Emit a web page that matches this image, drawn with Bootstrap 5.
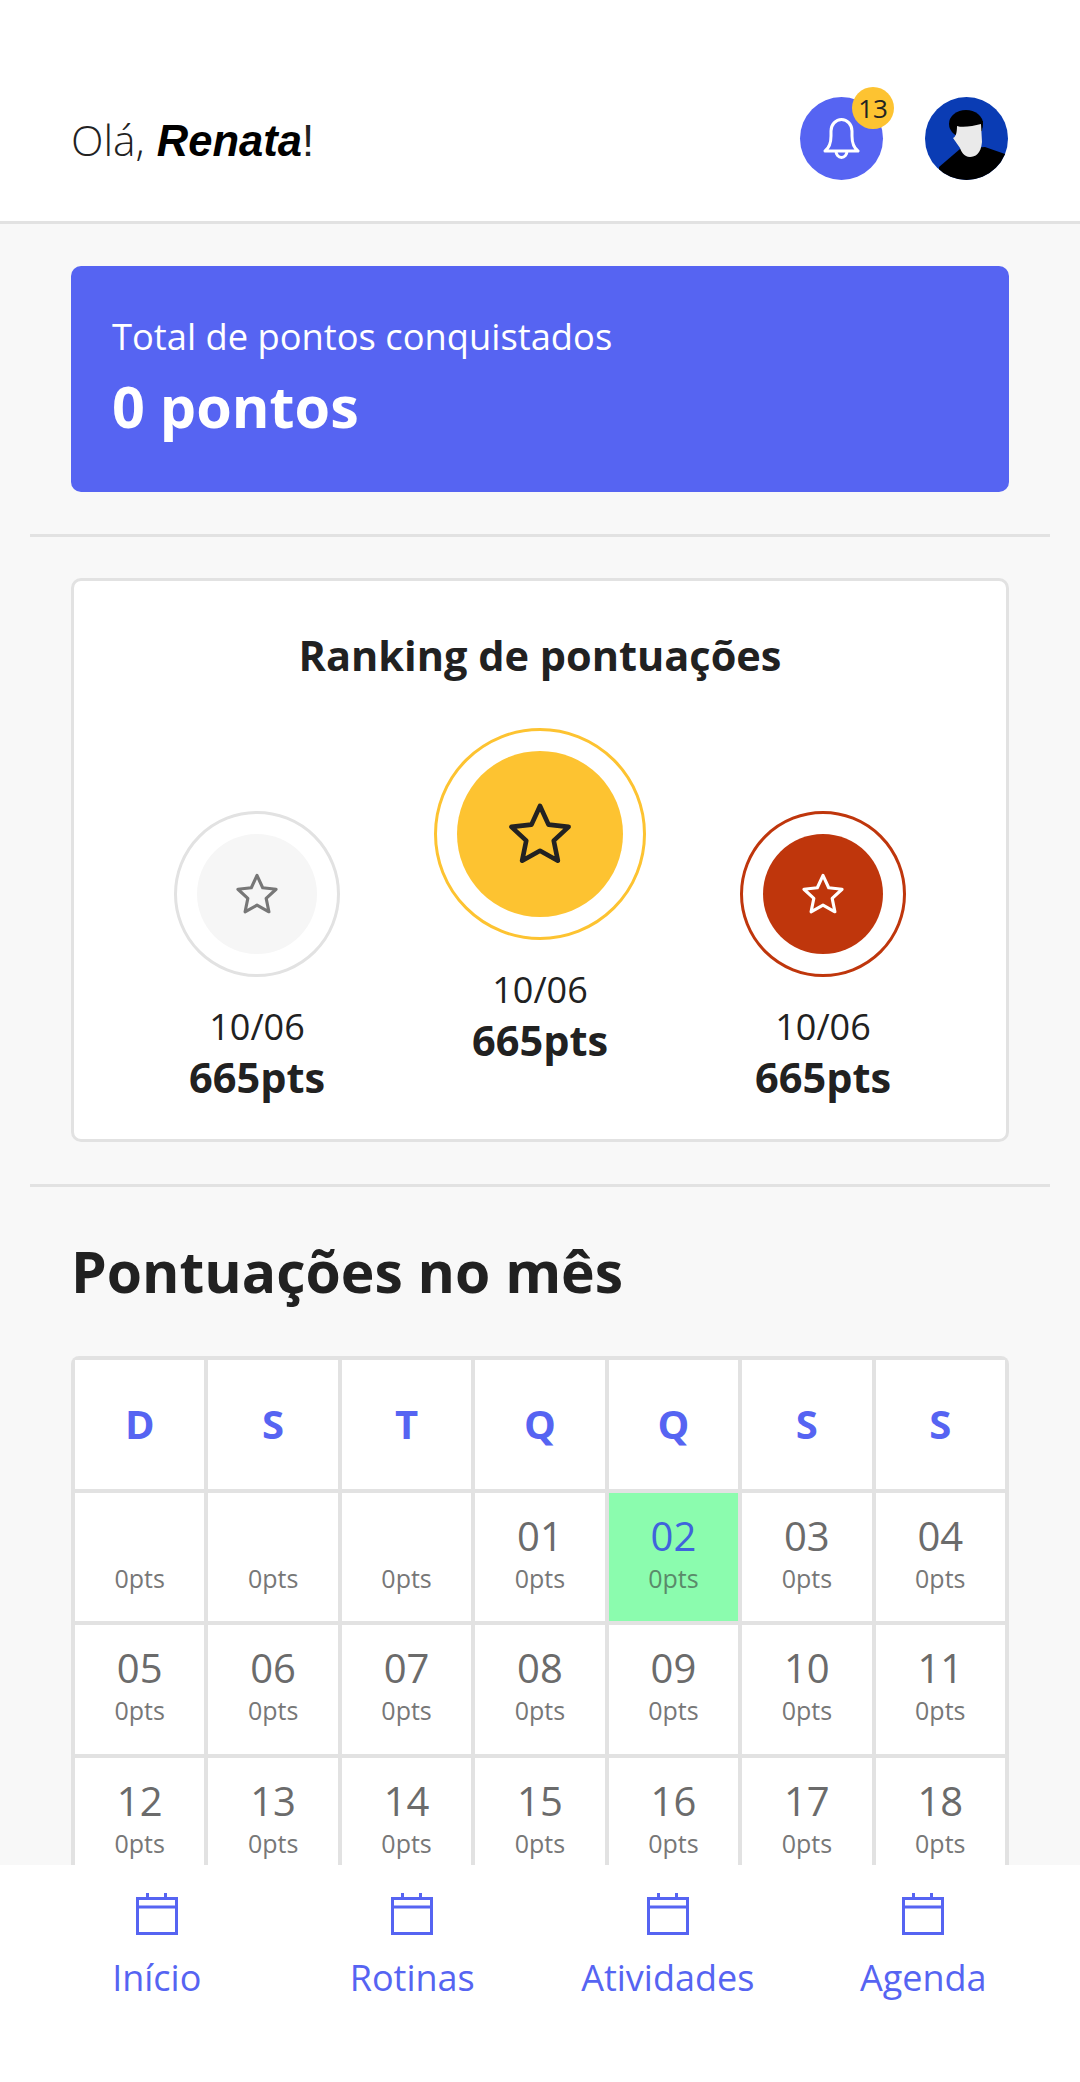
<!DOCTYPE html>
<html lang="pt-BR">
<head>
    <meta charset="UTF-8">
    <title>Pontuações</title>
    <link href="https://cdn.jsdelivr.net/npm/bootstrap@5.3.3/dist/css/bootstrap.min.css" rel="stylesheet">
    <style>
        html, body {
            height: 2082px;
            overflow: hidden;
        }
        body {
            background: #f8f8f8;
            color: #212121;
            font-family: "Open Sans", sans-serif;
        }
        .top-bar {
            height: 224px;
            padding: 97px 72px 0 71px;
            background: #fff;
            border-bottom: 3px solid #e2e2e2;
        }
        .hello {
            font-size: 43.500px;
            line-height: 86px;
            font-family: "Liberation Sans", sans-serif;
            color: #222;
        }
        .hello b {
            font-style: italic;
            font-weight: 700;
            color: #000;
        }
        .hello-o {
            font-family: "Open Sans", sans-serif;
            font-size: 42.500px;
            font-weight: 300;
        }
        .head-icons {
            gap: 42px;
        }
        .round-btn {
            position: relative;
            width: 83px;
            height: 83px;
            border-radius: 50%;
            background: #5664f2;
        }
        .bell-count {
            position: absolute;
            top: -10px;
            left: 52px;
            width: 42px;
            height: 42px;
            border-radius: 50%;
            background: #fdc331;
            font-size: 26px;
            font-weight: 400;
            line-height: 42px;
            text-align: center;
            color: #222;
        }
        .block-line {
            margin: 0 30px;
            padding: 41px 41px 42px;
            border-bottom: 3px solid #e2e2e2;
        }
        .block-line.first-block {
            padding-top: 42px;
        }
        .points-card {
            height: 226px;
            padding: 45px 41px;
            border-radius: 10px;
            background: #5664f2;
            color: #fff;
        }
        .points-label {
            font-size: 36.300px;
            font-weight: 400;
            line-height: 50px;
        }
        .points-value {
            margin-top: 7px;
            font-size: 57.500px;
            font-weight: 700;
            line-height: 76px;
        }
        .ranking-card {
            height: 564px;
            border: 3px solid #e2e2e2;
            border-radius: 10px;
            background: #fff;
        }
        .ranking-title {
            margin: 0;
            padding-top: 47px;
            font-size: 41.500px;
            font-weight: 700;
            line-height: 55px;
            text-align: center;
        }
        .podium-row {
            margin-top: 45px;
        }
        .podium-col {
            width: 283px;
            text-align: center;
        }
        .podium-col.side {
            padding-top: 83px;
        }
        .medal {
            margin: 0 auto;
            border-radius: 50%;
            border: 3px solid;
            background: #fff;
        }
        .medal-inner {
            border-radius: 50%;
        }
        .medal.small-m {
            width: 166px;
            height: 166px;
        }
        .medal.small-m .medal-inner {
            width: 120px;
            height: 120px;
        }
        .medal.big-m {
            width: 212px;
            height: 212px;
        }
        .medal.big-m .medal-inner {
            width: 166px;
            height: 166px;
        }
        .podium-date {
            margin-top: 26px;
            font-size: 36px;
            font-weight: 400;
            line-height: 48px;
        }
        .podium-pts {
            font-size: 41.500px;
            font-weight: 700;
            line-height: 53px;
        }
        .month-area {
            padding: 43px 71px 0;
        }
        .month-title {
            margin: 0 0 44px;
            font-size: 57px;
            font-weight: 700;
            line-height: 82px;
        }
        .cal-grid {
            display: grid;
            grid-template-columns: repeat(7, 1fr);
            grid-auto-rows: 128.500px;
            gap: 4px;
            padding: 4px;
            border-radius: 8px;
            background: #e2e2e2;
        }
        .cal-cell {
            background: #fff;
            text-align: center;
            color: #6b6b6b;
        }
        .cal-head {
            font-size: 40px;
            font-weight: 700;
            line-height: 128px;
            color: #5664f2;
        }
        .cal-num {
            height: 50px;
            margin-top: 18px;
            font-size: 40px;
            font-weight: 400;
            line-height: 50px;
        }
        .cal-pts {
            font-size: 25px;
            font-weight: 400;
            line-height: 34px;
            color: #777;
        }
        .cal-cell.today {
            background: #8bfcae;
        }
        .cal-cell.today .cal-num {
            color: #3f63dc;
        }
        .cal-cell.today .cal-pts {
            color: #5a8a6a;
        }
        .bottom-nav {
            position: fixed;
            left: 0;
            right: 0;
            bottom: 0;
            height: 217px;
            padding-top: 28px;
            background: #fff;
        }
        .nav-slot {
            width: 255.500px;
            color: #5664f2;
            font-size: 36px;
            font-weight: 400;
            line-height: 48px;
            text-align: center;
        }
        .nav-slot svg {
            display: block;
            margin: 0 auto 19px;
        }
    </style>
</head>
<body>
    <!-- Header -->
    <header class="top-bar d-flex justify-content-between">
        <div class="hello"><span class="hello-o">Olá,</span> <b>Renata</b>!</div>
        <div class="head-icons d-flex">
            <div class="round-btn d-flex align-items-center justify-content-center">
                <svg width="37" height="42" viewBox="0 0 37 42" fill="none" stroke="#fff" stroke-width="3" stroke-linejoin="round">
                    <path d="M2 33c4-3 6-7 6-15V13a10.500 11.500 0 0 1 21 0v5c0 8 2 12 6 15z"/>
                    <path d="M13 33a5.500 6.500 0 0 0 11 0"/>
                </svg>
                <span class="bell-count">13</span>
            </div>
            <svg class="d-block" width="83" height="83" viewBox="0 0 83 83">
                <defs><clipPath id="avatarClip"><circle cx="41.500" cy="41.500" r="41.500"/></clipPath></defs>
                <g clip-path="url(#avatarClip)">
                    <rect width="83" height="83" fill="#0a3cb4"/>
                    <path d="M14 70 35 52 60 50 80 57V83H14z" fill="#000"/>
                    <ellipse cx="41" cy="27" rx="17" ry="14" fill="#000"/>
                    <path d="M24 26 31 38 57 34 58 24z" fill="#000"/>
                    <path d="M32 29C38 31 48 29 56 27L57 45C56 57 50 60 45 60 39 60 36 54 35 51L28 41C31 40 32 35 32 29z" fill="#eaeaea"/>
                </g>
            </svg>
        </div>
    </header>

    <!-- Total -->
    <section class="block-line first-block">
        <div class="points-card">
            <div class="points-label">Total de pontos conquistados</div>
            <div class="points-value">0 pontos</div>
        </div>
    </section>

    <!-- Ranking -->
    <section class="block-line">
        <div class="ranking-card">
            <h2 class="ranking-title">Ranking de pontuações</h2>
            <div class="podium-row d-flex justify-content-center" id="podium"></div>
        </div>
    </section>

    <!-- Calendar -->
    <section class="month-area">
        <h1 class="month-title">Pontuações no mês</h1>
        <div class="cal-grid" id="calendar"></div>
    </section>

    <!-- Bottom nav -->
    <nav class="bottom-nav d-flex justify-content-center" id="bottomNav"></nav>

    <script src="https://cdn.jsdelivr.net/npm/bootstrap@5.3.3/dist/js/bootstrap.bundle.min.js"></script>
    <script>
        const star = (size, color, weight) => `
            <svg width="${size}" height="${size}" viewBox="0 0 24 24" fill="none" stroke="${color}" stroke-width="${weight}" stroke-linejoin="round">
                <path d="M12 1.800l3.100 6.800 7.300.800-5.400 5 1.500 7.300L12 18.100l-6.500 3.600L7 14.400l-5.400-5 7.300-.800z"/>
            </svg>`;

        const podium = [
            { side: true, size: "small-m", ring: "#e2e2e2", fill: "#f6f6f6", star: star(44, "#777", 1.700) },
            { side: false, size: "big-m", ring: "#fdc331", fill: "#fdc331", star: star(66, "#222", 1.700) },
            { side: true, size: "small-m", ring: "#bf360c", fill: "#bf360c", star: star(44, "#fff", 1.700) }
        ];

        document.getElementById("podium").innerHTML = podium.map(p => `
            <div class="podium-col ${p.side ? "side" : ""}">
                <div class="medal ${p.size} d-flex align-items-center justify-content-center" style="border-color: ${p.ring}">
                    <div class="medal-inner d-flex align-items-center justify-content-center" style="background: ${p.fill}">${p.star}</div>
                </div>
                <div class="podium-date">10/06</div>
                <div class="podium-pts">665pts</div>
            </div>`).join("");

        let cells = ["D", "S", "T", "Q", "Q", "S", "S"].map(d => `<div class="cal-cell cal-head">${d}</div>`);
        for (let i = -2; i <= 18; i++) {
            const num = i > 0 ? String(i).padStart(2, "0") : "";
            cells.push(`<div class="cal-cell ${i === 2 ? "today" : ""}"><div class="cal-num">${num}</div><div class="cal-pts">0pts</div></div>`);
        }
        document.getElementById("calendar").innerHTML = cells.join("");

        const calendarIcon = `
            <svg width="42" height="42" viewBox="0 0 42 42" fill="none" stroke="#5664f2" stroke-width="3">
                <rect x="1.500" y="5.500" width="39" height="35"/>
                <path d="M1 14h40M11.500 0v5M29.500 0v5"/>
            </svg>`;
        document.getElementById("bottomNav").innerHTML = ["Início", "Rotinas", "Atividades", "Agenda"]
            .map(label => `<div class="nav-slot">${calendarIcon}${label}</div>`).join("");
    </script>
</body>
</html>
